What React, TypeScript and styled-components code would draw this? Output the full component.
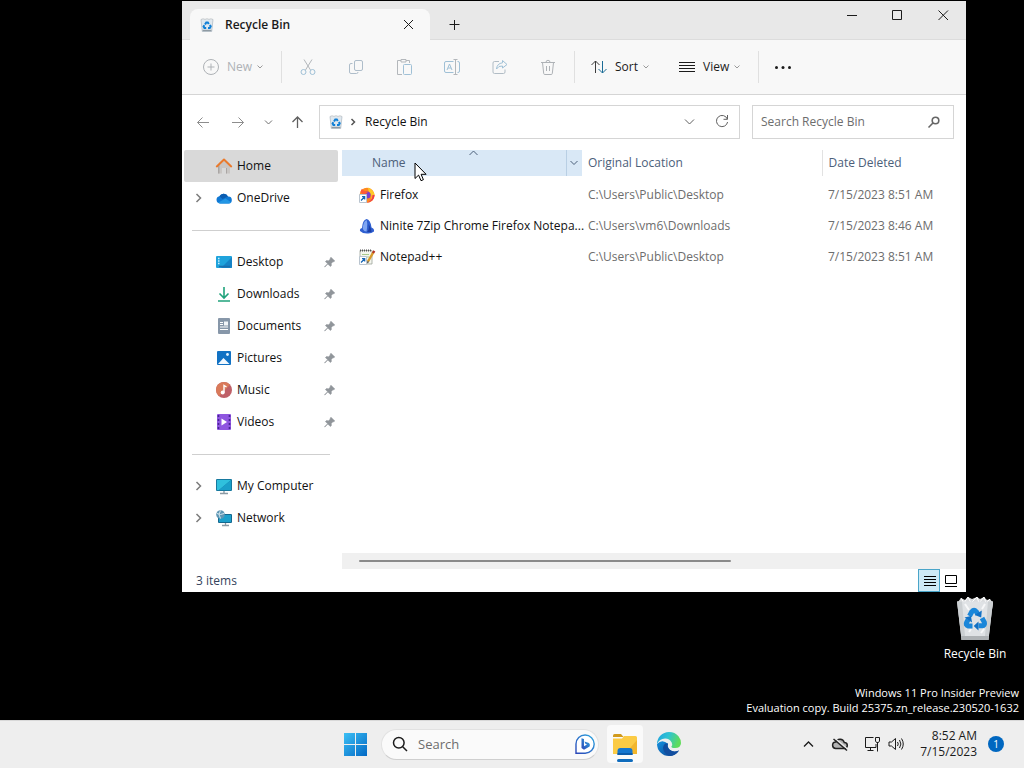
import React, { useState } from "react";
import styled, { createGlobalStyle, ThemeProvider } from "styled-components";

const theme = {
  font: '"Open Sans", "Noto Sans", "Liberation Sans", sans-serif',
  size: "12px",
  ink: "#1b1b1b",
  muted: "#6d6d6d",
  column: "#4c607a",
  line: "#d5d5d5",
  chrome: "#e8e8e8",
  surface: "#f8f8f8",
};

const GlobalStyle = createGlobalStyle`
  *, *::before, *::after { box-sizing: border-box; }
  body { margin: 0; background: #000; }
  button, input { font: inherit; color: inherit; }
`;

/* ---------- shared ---------- */

const Svg = styled.svg<{ $size?: number }>`
  display: block;
  flex: none;
  width: ${(p) => p.$size ?? 16}px;
  height: ${(p) => p.$size ?? 16}px;
  overflow: visible;
`;

type IconProps = { size?: number };

const Stroke = ({ d, size = 16, width = 1, color = "currentColor" }: { d: string; size?: number; width?: number; color?: string }) => (
  <Svg $size={size} viewBox={`0 0 ${size} ${size}`} fill="none" stroke={color} strokeWidth={width} aria-hidden="true">
    <path d={d} />
  </Svg>
);

const ChevronDown = () => <Stroke size={8} d="M1.5 2.5 4 5l2.5-2.5" />;

/* ---------- desktop ---------- */

const Screen = styled.div`
  display: flex;
  flex-direction: column;
  min-height: 100vh;
  background: #000;
  color: ${(p) => p.theme.ink};
  font-family: ${(p) => p.theme.font};
  font-size: ${(p) => p.theme.size};
  line-height: 16px;
`;

const Desktop = styled.main`
  position: relative;
  flex: 1;
  display: flex;
  padding: 1px 58px 128px 182px;
`;

const DesktopIcon = styled.button`
  position: absolute;
  right: 11px;
  bottom: 58px;
  width: 76px;
  display: flex;
  flex-direction: column;
  align-items: center;
  gap: 5px;
  padding: 0;
  border: 0;
  background: none;
  color: #fff;
  white-space: nowrap;
`;

const Watermark = styled.div`
  position: absolute;
  right: 5px;
  bottom: 5px;
  color: #fff;
  font-size: 11px;
  line-height: 15px;
  text-align: right;
`;

/* ---------- window ---------- */

const Window = styled.section`
  flex: 1;
  min-width: 0;
  display: flex;
  flex-direction: column;
  background: #fff;
`;

const TitleBar = styled.header`
  display: flex;
  height: 39px;
  padding-left: 8px;
  background: ${(p) => p.theme.chrome};
  border-bottom: 1px solid #dcdcdc;
`;

const Tab = styled.div`
  display: flex;
  align-items: center;
  align-self: flex-end;
  width: 240px;
  height: 31px;
  margin-bottom: -1px;
  padding: 0 14px 0 10px;
  gap: 11px;
  border-radius: 8px 8px 0 0;
  background: ${(p) => p.theme.surface};
`;

const TabTitle = styled.h1`
  flex: 1;
  margin: 0;
  font-size: inherit;
  font-weight: 600;
`;

const IconButton = styled.button<{ $w?: number; $h?: number; $color?: string; $low?: boolean }>`
  display: flex;
  flex: none;
  align-items: center;
  align-self: ${(p) => (p.$low ? "flex-end" : "auto")};
  justify-content: center;
  width: ${(p) => p.$w ?? 16}px;
  height: ${(p) => p.$h ?? 16}px;
  padding: 0;
  border: 0;
  background: none;
  color: ${(p) => p.$color ?? "inherit"};
`;

const Caption = styled.div`
  display: flex;
  margin-left: auto;
`;

const Toolbar = styled.div`
  display: flex;
  align-items: center;
  height: 55px;
  padding-left: 12px;
  background: ${(p) => p.theme.surface};
  border-bottom: 1px solid ${(p) => p.theme.line};
`;

const ToolButton = styled.button<{ $w: number; $pad?: number }>`
  display: flex;
  align-items: center;
  justify-content: ${(p) => (p.$pad ? "flex-start" : "center")};
  gap: 8px;
  width: ${(p) => p.$w}px;
  height: 32px;
  padding: 0 0 0 ${(p) => p.$pad ?? 0}px;
  border: 0;
  background: none;

  &:disabled {
    color: #aeb2b6;
  }

  svg:last-child:not(:first-child) {
    margin-left: -4px;
    color: #9a9a9a;
  }
`;

const ToolDivider = styled.span`
  width: 1px;
  height: 32px;
  margin: 0 2px;
  background: #e0e0e0;
`;

const AddressRow = styled.div`
  display: flex;
  align-items: center;
  padding: 10px 12px 11px 9px;
`;

const Field = styled.div<{ $search?: boolean }>`
  display: flex;
  align-items: center;
  flex: ${(p) => (p.$search ? "0 1 202px" : "1 1 0")};
  min-width: 0;
  height: 34px;
  margin-left: ${(p) => (p.$search ? 12 : 0)}px;
  padding: 0 ${(p) => (p.$search ? "12px 0 8px" : "1px 0 9px")};
  border: 1px solid ${(p) => p.theme.line};
  background: #fff;
`;

const Crumb = styled.span`
  flex: 1;
  color: #111;
`;

const SearchInput = styled.input`
  flex: 1;
  min-width: 0;
  padding: 0;
  border: 0;
  outline: 0;
  background: none;

  &::placeholder {
    color: ${(p) => p.theme.muted};
    opacity: 1;
  }
`;

const Body = styled.div`
  flex: 1;
  display: flex;
`;

/* ---------- navigation pane ---------- */

const Sidebar = styled.nav`
  flex: none;
  width: 160px;
  padding: 0 4px 0 2px;
`;

const Group = styled.ul`
  margin: 0;
  padding: 0;
  list-style: none;

  & + & {
    padding-top: 32px;
    background: linear-gradient(#cfcfcf, #cfcfcf) 8px 16px / 138px 1px no-repeat;
  }
`;

const NavLink = styled.a<{ $active?: boolean }>`
  display: grid;
  grid-template-columns: 18px 16px 1fr 12px;
  column-gap: 5px;
  align-items: center;
  height: 32px;
  padding: 0 2px 0 9px;
  border-radius: 2px;
  background: ${(p) => (p.$active ? "#d9d9d9" : "transparent")};
  color: #111;
  text-decoration: none;
  white-space: nowrap;
`;

const NavSlot = styled.span`
  display: flex;
  color: #7b7b7b;
`;

/* ---------- file list ---------- */

const Content = styled.div`
  flex: 1;
  min-width: 0;
  display: flex;
  flex-direction: column;
`;

const Files = styled.table`
  width: 100%;
  table-layout: fixed;
  border-collapse: collapse;
`;

const Col = styled.col<{ $w?: number }>`
  width: ${(p) => (p.$w ? `${p.$w}px` : "auto")};
`;

const Head = styled.th<{ $sorted?: boolean; $line?: boolean }>`
  position: relative;
  height: 26px;
  padding: 0 0 0 ${(p) => (p.$sorted ? 30 : 6)}px;
  border-left: ${(p) => (p.$line ? "1px solid #e2e2e2" : "0")};
  background: ${(p) => (p.$sorted ? "#d9e8f6" : "transparent")};
  color: ${(p) => p.theme.column};
  font-weight: 400;
  text-align: left;
  white-space: nowrap;
`;

const HeadInner = styled.div`
  display: flex;
  align-items: center;
  justify-content: space-between;
`;

const HeadButton = styled.button`
  padding: 0;
  border: 0;
  background: none;
`;

const FilterButton = styled.button`
  display: flex;
  align-items: center;
  justify-content: center;
  width: 16px;
  height: 26px;
  padding: 0 2px 0 0;
  border: 0;
  border-left: 1px solid #b9cfe4;
  background: none;
`;

const SortMark = styled.span`
  position: absolute;
  top: 0;
  left: 127px;
`;

const Pointer = styled.svg`
  position: absolute;
  z-index: 1;
  top: 12px;
  left: 72px;
  width: 13px;
  height: 20px;
`;

const Cell = styled.td<{ $name?: boolean }>`
  height: 31px;
  padding: 0 0 0 ${(p) => (p.$name ? 17 : 6)}px;
  color: ${(p) => (p.$name ? "#111" : p.theme.muted)};
  white-space: nowrap;
`;

const FileName = styled.div`
  display: flex;
  align-items: center;
  gap: 5px;
`;

const Gap = styled.tbody`
  td { height: 3px; padding: 0; }
`;

const ScrollTrack = styled.div`
  height: 16px;
  margin-top: auto;
  padding: 7px 17px;
  background: #f0f0f0;
`;

const ScrollThumb = styled.div`
  width: 63%;
  height: 2px;
  border-radius: 1px;
  background: #8a8a8a;
`;

const StatusBar = styled.footer`
  display: flex;
  align-items: center;
  height: 23px;
  padding: 0 4px 0 14px;
  color: #33435c;
`;

const ViewButton = styled.button<{ $on?: boolean }>`
  display: flex;
  align-items: center;
  justify-content: center;
  width: 22px;
  height: 23px;
  padding: 0;
  border: 1px solid ${(p) => (p.$on ? "#4aa5c9" : "transparent")};
  background: ${(p) => (p.$on ? "#cdeaf6" : "none")};
  color: #000;

  &:first-of-type {
    margin-left: auto;
  }
`;

/* ---------- taskbar ---------- */

const Taskbar = styled.footer`
  display: grid;
  grid-template-columns: 1fr auto 1fr;
  align-items: center;
  height: 48px;
  padding-bottom: 1px;
  background: #eeeeee;
  border-top: 1px solid #d8d8d8;
`;

const Pins = styled.div`
  grid-column: 2;
  display: flex;
  align-items: center;
  gap: 8px;
`;

const TaskSearch = styled.label`
  display: flex;
  align-items: center;
  gap: 10px;
  width: 218px;
  height: 31px;
  padding: 0 3px 0 10px;
  border: 1px solid #e2e2e2;
  border-bottom-color: #cfcfcf;
  border-radius: 16px;
  background: #fafafa;
  font-size: 13px;
`;

const AppButton = styled.button<{ $open?: boolean }>`
  position: relative;
  display: flex;
  align-items: center;
  justify-content: center;
  width: 36px;
  height: 38px;
  padding: 0;
  border: 0;
  border-radius: 4px;
  background: ${(p) => (p.$open ? "#fafafa" : "none")};

  &::after {
    content: "";
    position: absolute;
    bottom: 1px;
    left: 10px;
    width: 16px;
    height: 3px;
    border-radius: 2px;
    background: ${(p) => (p.$open ? "#0f6cbd" : "none")};
  }
`;

const Tray = styled.div`
  display: flex;
  align-items: center;
  justify-content: flex-end;
  padding-right: 20px;
  gap: 8px;
`;

const Clock = styled.time`
  margin: 0 3px 0 8px;
  text-align: right;
  white-space: nowrap;
`;

const Badge = styled.span`
  width: 16px;
  height: 16px;
  border-radius: 50%;
  background: #0067c0;
  color: #fff;
  font-size: 10px;
  text-align: center;
`;

/* ---------- drawings ---------- */

const RecycleArrows = () => (
  <g fill="none" stroke="#1a86d9" strokeWidth="5">
    <path d="M13.500 17 16 12.500q2-2.600 4.200 0l1.600 2.800" />
    <path d="M26 19l2.400 4.400q.8 3-2.400 3.400h-3.500" />
    <path d="M16.500 27h-4.200q-3.200-.8-1.600-3.800l1.500-2.700" />
    <path d="M25.800 11.500l-.6 7-6.400-2.600zM22.500 22.500v9l-4.800-4.400zM8.500 18.600l6.400-1.600 1.200 6.400z" fill="#1170c4" stroke="none" />
  </g>
);

const BigBin = () => (
  <svg width="36" height="45" viewBox="0 0 36 45" aria-hidden="true">
    <path d="M1 6 4 2l4 2 3-3 4 2 5-2 3 2 4-2 3 3 3-1 3 4-1 6H2z" fill="#d9dbdd" />
    <path d="M4 2l3 5 4-6 3 6 6-6 2 6 5-6 2 6 4-4" stroke="#fff" fill="none" />
    <path d="M0 5.500 36 5.500 31.500 44 4.500 44z" fill="#dfe2e5" />
    <path d="M0 5.500 5 5.500 8 40 4.200 40zM36 5.500 31 5.500 28 40 31.800 40z" fill="#cbcfd2" />
    <path d="M4.200 40H31.800L31.500 44H4.500z" fill="#aeb2b5" />
    <path d="M8 8l4 6M28 8l-3 5M12 36l2-3M27 33l-3 4" stroke="#f7f8f9" strokeWidth="2" />
    <g transform="translate(-1 3)"><RecycleArrows /></g>
  </svg>
);

const SmallBin = ({ size = 14 }: IconProps) => (
  <Svg $size={size} viewBox="0 0 14 14" aria-hidden="true">
    <path d="M1 1.500h12L11.700 13.500H2.300z" fill="#dfe8ef" stroke="#b4bec6" strokeWidth=".8" />
    <path d="M1 1.500 3 .5l2 .8L7 .4l2 .9 2-.8 2 1" fill="#f6f6f6" stroke="#c0c5c8" strokeWidth=".6" />
    <path d="M2.600 12.500h8.800" stroke="#8f9ba3" strokeWidth="1.400" />
    <path d="M5 6.600 6.300 4.400h1.500l1 1.600M10 6.800l.7 1.700-.9 1.400H8M6.200 9.900H4.400L3.600 8.600l.8-1.400" fill="none" stroke="#0f7fd6" strokeWidth="2" />
  </Svg>
);

const HomeIcon = () => (
  <Svg viewBox="0 0 16 16" aria-hidden="true">
    <path d="M2 7.500V15.500h4V10h4v5.500h4V7.500L8 2z" fill="#c9c6c4" />
    <path d="M2 7.500V15.500h1.500V7zM10 10v5.500h1V10z" fill="#aaa6a4" />
    <path d="M.8 8.400 8 1.600l7.200 6.800" fill="none" stroke="#ea7a2c" strokeWidth="2" strokeLinecap="round" strokeLinejoin="round" />
  </Svg>
);

const CloudIcon = () => (
  <Svg viewBox="0 0 16 16" aria-hidden="true">
    <path d="M4 13.500a3.700 3.700 0 0 1-.6-7.300A4.800 4.800 0 0 1 12 6.500a3.500 3.500 0 0 1 .6 7z" fill="#0f78d4" />
    <path d="M3.400 6.200A4.800 4.800 0 0 1 12 6.500L6.500 9z" fill="#0b5cb0" />
    <path d="M2 12.800 9.500 8.500l5.600 3.700a3.400 3.400 0 0 1-2.500 1.300H4a3.600 3.600 0 0 1-2-.7z" fill="#2396e4" />
  </Svg>
);

const DesktopGlyph = () => (
  <Svg viewBox="0 0 16 16" aria-hidden="true">
    <rect y="2" width="16" height="12" rx="1" fill="#1fa3dc" />
    <path d="M16 3v10a1 1 0 0 1-1 1H5z" fill="#1683c6" />
    <path d="M2 4.500h1.500M2 7h1.500M2 9.500h1.500" stroke="#c9f1ff" strokeWidth="1.500" />
    <path d="M3 12.500h11" stroke="#1b6fae" strokeWidth="1.500" />
  </Svg>
);

const DownloadIcon = () => <Stroke color="#20a37c" width={1.6} d="M8 1v10.500M3.500 7.500 8 12l4.500-4.500M2 15h12" />;

const DocumentIcon = () => (
  <Svg viewBox="0 0 16 16" aria-hidden="true">
    <rect x="2" width="12" height="16" rx="1" fill="#8797a9" />
    <path d="M4 4.500h3M4 6.500h3M4 9h8M4 11.500h8" stroke="#fff" strokeWidth="1.200" />
    <path d="M8 3.500h4v4H8z" fill="#f3f6f9" />
  </Svg>
);

const PictureIcon = () => (
  <Svg viewBox="0 0 16 16" aria-hidden="true">
    <rect x="1" y="1" width="14" height="14" rx="1" fill="#1272c4" />
    <path d="M2 14 7.500 8 13.500 14z" fill="#f2f9ff" />
    <circle cx="11.500" cy="4.500" r="1.400" fill="#e6f5ff" />
  </Svg>
);

const MusicIcon = () => (
  <Svg viewBox="0 0 16 16" aria-hidden="true">
    <circle cx="8" cy="8" r="8" fill="#bf6068" />
    <path d="M0 8a8 8 0 0 1 14-5.300L3 14.200A8 8 0 0 1 0 8z" fill="#d97a5a" />
    <circle cx="6.700" cy="10.500" r="2" fill="#fff" />
    <path d="M8 10.500V3.500l2.500 1.500" fill="none" stroke="#fff" strokeWidth="1.400" />
  </Svg>
);

const VideoIcon = () => (
  <Svg viewBox="0 0 16 16" aria-hidden="true">
    <rect x="1" width="14" height="16" rx="1" fill="#8f56e0" />
    <path d="M2.500 1v14M13.500 1v14" stroke="#4a2396" strokeWidth="1.600" strokeDasharray="2 2" />
    <path d="M5.500 4.500v7l5.500-3.500z" fill="#fff" />
  </Svg>
);

const ComputerIcon = () => (
  <Svg viewBox="0 0 16 16" aria-hidden="true">
    <rect y="1" width="16" height="12" rx="1" fill="#17799f" />
    <path d="M1 2h14L3 12H1z" fill="#2fc0dd" />
    <path d="M15 2v10H3z" fill="#1a9fc9" />
    <path d="M8 13v2M4 15.500h8" stroke="#8b9aa5" strokeWidth="1.400" />
  </Svg>
);

const NetworkIcon = () => (
  <Svg viewBox="0 0 16 16" aria-hidden="true">
    <rect x="2" y="4" width="14" height="9" rx="1" fill="#14688f" />
    <path d="M3 5h12v7H3z" fill="#1da0cb" />
    <path d="M9.500 13v2M6 15.500h7" stroke="#8b9aa5" strokeWidth="1.300" />
    <circle cx="4.500" cy="4.500" r="4.300" fill="#5f97b5" />
    <path d="M1 3.500q3.500 2 7 0M4.500.5q-3 4 0 8" fill="none" stroke="#d4e6ee" />
  </Svg>
);

const PinIcon = () => (
  <Svg $size={12} viewBox="0 0 12 12" aria-hidden="true">
    <path d="M7 1.200 10.800 5l-1 .8-.8-.1-1.700 1.700.1 2.200-1 1L3.800 8 1 10.900.6 11 .8 10.500 3.600 7.700 1.400 5.600l1-1 2.200.1L6.300 3l-.1-.9z" fill="#90959a" stroke="#90959a" strokeWidth=".5" />
  </Svg>
);

const ShortcutArrow = () => (
  <>
    <path d="M.5 7.500h7v8h-7z" fill="#fff" stroke="#b9c4cf" />
    <path d="M2 13.500 5.500 10M3 9.700h2.700v2.800" fill="none" stroke="#1464b4" strokeWidth="1.200" />
  </>
);

const FirefoxIcon = () => (
  <Svg viewBox="0 0 16 16" aria-hidden="true">
    <circle cx="8" cy="8.200" r="7.500" fill="#ff8a1e" />
    <path d="M9 .5q6 2.500 6.500 7.500a7.500 7.500 0 0 1-5 7q4-5 .5-9Q9 4 9 .5z" fill="#ffc928" />
    <path d="M15.500 8a7.500 7.500 0 0 1-8 7.700q6-2 6-7.700z" fill="#f0384f" />
    <circle cx="8" cy="8" r="3.600" fill="#7a3fd0" />
    <path d="M1.500 5Q2 2.500 3 1.800 4 4 7 4.200q2 .6 1.500 1.800-3 .5-3.500 2.500z" fill="#ff5a36" />
    <ShortcutArrow />
  </Svg>
);

const NiniteIcon = () => (
  <Svg viewBox="0 0 16 16" aria-hidden="true">
    <path d="M1 13Q.5 10.500 3 10 3.500 2 7.500 1q4 .5 5 8.500 3 1 2.500 4-3 2.500-7 2-4.500 0-7-2.500z" fill="#2f5fd0" />
    <path d="M3.800 11Q4 3.500 7.500 2 9 5 7.500 13.500 5 13.500 3.800 11z" fill="#7fa6f2" />
    <path d="M8 14q2.500-2 1.500-8 3 5 3 8z" fill="#1c3fa4" />
  </Svg>
);

const NotepadIcon = () => (
  <Svg viewBox="0 0 16 16" aria-hidden="true">
    <path d="M1 1.500h12v13.500H1z" fill="#f4f6ee" stroke="#9da39b" strokeWidth=".8" />
    <path d="M1 1.500h12" stroke="#555" strokeWidth="2" strokeDasharray="1 1" />
    <path d="M3 5.500h7M3 8h7" stroke="#a8c98c" />
    <path d="M9 12.500 14.500 3" stroke="#d79a2b" strokeWidth="2.400" />
    <path d="M14 4 15.300 1.800" stroke="#b43326" strokeWidth="2.400" />
    <path d="M8.200 14.500 8.500 12l1.500.9z" fill="#222" />
    <ShortcutArrow />
  </Svg>
);

const WindowsLogo = () => (
  <Svg $size={24} viewBox="0 0 24 24" aria-hidden="true">
    <defs>
      <linearGradient id="win" x1="0" y1="0" x2="1" y2="1">
        <stop offset="0" stopColor="#3cc0f5" />
        <stop offset="1" stopColor="#0268c4" />
      </linearGradient>
    </defs>
    <path d="M1 1h11v11H1zM13 1h11v11H13zM1 13h11v11H1zM13 13h11v11H13z" fill="url(#win)" />
  </Svg>
);

const BingIcon = () => (
  <Svg $size={20} viewBox="0 0 20 20" aria-hidden="true">
    <defs>
      <linearGradient id="bing" x1="0" y1="1" x2="1" y2="0">
        <stop offset="0" stopColor="#2b46b8" />
        <stop offset="1" stopColor="#2fa8e0" />
      </linearGradient>
    </defs>
    <path d="M1 19.200V10a9.100 9.100 0 1 1 9.200 9.200z" fill="#fff" stroke="url(#bing)" strokeWidth="1.400" />
    <path d="M6.500 4.200 9 5v7.200l3-1.700-1.600-.8-1-2.300 4.600 1.600q1.600 1.700.6 3.600L9 15.800 6.500 14z" fill="url(#bing)" />
  </Svg>
);

const FolderIcon = () => (
  <Svg $size={24} viewBox="0 0 24 24" aria-hidden="true">
    <path d="M0 3.500Q0 2 1.500 2H8l2.500 3H0z" fill="#d19a1c" />
    <path d="M0 6.500h9L11 4h11.500Q24 4 24 5.500V22H0z" fill="#fbcb45" />
    <path d="M24 8v14H12z" fill="#f2b62c" />
    <path d="M4.500 23v-4Q4.500 16 7.500 16h9q3 0 3 3v4z" fill="#1476cf" />
    <path d="M4.500 23v-2h15v2z" fill="#0c5cab" />
  </Svg>
);

const EdgeIcon = () => (
  <Svg $size={24} viewBox="0 0 24 24" aria-hidden="true">
    <defs>
      <linearGradient id="edgeTop" x1="0" y1="0" x2="1" y2=".3">
        <stop offset="0" stopColor="#1f9fe0" />
        <stop offset=".5" stopColor="#2fc3d2" />
        <stop offset="1" stopColor="#5fdc5a" />
      </linearGradient>
      <linearGradient id="edgeLow" x1="0" y1="0" x2="1" y2="1">
        <stop offset="0" stopColor="#1591df" />
        <stop offset="1" stopColor="#0b3f8f" />
      </linearGradient>
    </defs>
    <path d="M0 12a12 12 0 0 0 12 12q6.500 0 10-5.500-5 2.500-9-.5-3.200-2.600-2-6.200Q5 6.500 0 12z" fill="url(#edgeLow)" />
    <path d="M0 12A12 12 0 0 1 12 0q6 0 9.500 4.300Q24 7.500 24 11.200q-.4 4.800-6 4.900-3.700-.2-3.600-1.700 1.400-2 .3-4Q12.500 6.500 8 6.600 2.500 7 0 12z" fill="url(#edgeTop)" />
    <path d="M8.300 11.500Q4.500 15 7 19.500q2 3.600 6.500 4.400 5.500-.9 8.500-5.400-5.500 2.200-9.300-.7-3-2.600-1.700-6.200z" fill="#124e9f" />
  </Svg>
);

const TrayCloud = () => (
  <Svg $size={16} viewBox="0 0 16 16" fill="none" aria-hidden="true">
    <path d="M4 12.500a3.300 3.300 0 0 1-.2-6.600A4.600 4.600 0 0 1 12.300 6.500a3 3 0 0 1 0 6z" fill="#b4b4b4" stroke="#222" strokeWidth="1.500" />
    <path d="M2.500 2 15.500 13" stroke="#eee" strokeWidth="1.500" />
    <path d="M1.500 3 15 14.500" stroke="#222" strokeWidth="1.500" />
  </Svg>
);

/* ---------- data ---------- */

type NavItem = { label: string; icon: React.ReactNode; expand?: boolean; pin?: boolean };

const navGroups: NavItem[][] = [
  [
    { label: "Home", icon: <HomeIcon /> },
    { label: "OneDrive", icon: <CloudIcon />, expand: true },
  ],
  [
    { label: "Desktop", icon: <DesktopGlyph />, pin: true },
    { label: "Downloads", icon: <DownloadIcon />, pin: true },
    { label: "Documents", icon: <DocumentIcon />, pin: true },
    { label: "Pictures", icon: <PictureIcon />, pin: true },
    { label: "Music", icon: <MusicIcon />, pin: true },
    { label: "Videos", icon: <VideoIcon />, pin: true },
  ],
  [
    { label: "My Computer", icon: <ComputerIcon />, expand: true },
    { label: "Network", icon: <NetworkIcon />, expand: true },
  ],
];

const files = [
  { name: "Firefox", icon: <FirefoxIcon />, from: "C:\\Users\\Public\\Desktop", date: "7/15/2023 8:51 AM" },
  { name: "Ninite 7Zip Chrome Firefox Notepa...", icon: <NiniteIcon />, from: "C:\\Users\\vm6\\Downloads", date: "7/15/2023 8:46 AM" },
  { name: "Notepad++", icon: <NotepadIcon />, from: "C:\\Users\\Public\\Desktop", date: "7/15/2023 8:51 AM" },
];

const tools: { label: string; icon: React.ReactNode }[] = [
  {
    label: "Cut",
    icon: (
      <Svg viewBox="0 0 16 16" fill="none" stroke="#b3b7bb" aria-hidden="true">
        <path d="M4 .5 10.500 11M12 .5 5.500 11" />
        <circle cx="3.500" cy="13" r="2.500" stroke="#9fc0d6" />
        <circle cx="12.500" cy="13" r="2.500" stroke="#9fc0d6" />
      </Svg>
    ),
  },
  {
    label: "Copy",
    icon: (
      <Svg viewBox="0 0 16 16" fill="none" stroke="#aebdca" aria-hidden="true">
        <rect x="6.500" y="1.500" width="8" height="10" rx="1.500" />
        <path d="M4.500 4.500H3A1.500 1.500 0 0 0 1.500 6v7A1.500 1.500 0 0 0 3 14.500h5.500q1.500 0 1.500-1.500" />
      </Svg>
    ),
  },
  {
    label: "Paste",
    icon: (
      <Svg viewBox="0 0 16 16" fill="none" stroke="#b3b7bb" aria-hidden="true">
        <path d="M5 1.500H1.500v14H6M10 1.500h3.500V4M5 .5h5v2.500H5z" />
        <rect x="7.500" y="5.500" width="8" height="10" rx="1" stroke="#9fc0d6" />
      </Svg>
    ),
  },
  {
    label: "Rename",
    icon: (
      <Svg viewBox="0 0 16 16" fill="none" stroke="#9fc0d6" aria-hidden="true">
        <path d="M9.500 2.500H2A1.500 1.500 0 0 0 .5 4v8A1.500 1.500 0 0 0 2 13.500h7.500M13.500 2.500h.5A1.500 1.500 0 0 1 15.500 4v8a1.500 1.500 0 0 1-1.500 1.500h-.5M3 11 5.500 5 8 11M4 9h3" />
        <path d="M9.500.5h4M9.500 15.500h4M11.500.5v15" stroke="#b3b7bb" />
      </Svg>
    ),
  },
  {
    label: "Share",
    icon: (
      <Svg viewBox="0 0 16 16" fill="none" stroke="#b1bcc5" aria-hidden="true">
        <path d="M7 2.500H2.500A1.500 1.500 0 0 0 1 4v9a1.500 1.500 0 0 0 1.500 1.500h9A1.500 1.500 0 0 0 13 13v-2.500" />
        <path d="M10.500 1.500 15 5.500 10.500 9V7Q6.500 6.500 4.500 10 5 4.500 10.500 3.800z" stroke="#9fc0d6" strokeLinejoin="round" />
      </Svg>
    ),
  },
  {
    label: "Delete",
    icon: <Stroke d="M1 3.500h14M6 3.300a2 2 0 0 1 4 0M2.500 3.500l1.200 11q.1 1 1.100 1h6.400q1 0 1.100-1l1.200-11M6.500 7v5M9.500 7v5" />,
  },
];

/* ---------- page ---------- */

export default function App() {
  const [query, setQuery] = useState("");
  const [webQuery, setWebQuery] = useState("");

  return (
    <ThemeProvider theme={theme}>
      <GlobalStyle />
      <Screen>
        <Desktop>
          <Window aria-label="Recycle Bin">
            <TitleBar>
              <Tab>
                <SmallBin />
                <TabTitle>Recycle Bin</TabTitle>
                <IconButton aria-label="Close tab"><Stroke d="M4 3l9 9M13 3l-9 9" /></IconButton>
              </Tab>
              <IconButton $w={48} $h={31} $low aria-label="New tab">
                <Stroke d="M8.500 4v10M3.500 8.500h10" />
              </IconButton>
              <Caption>
                <IconButton $w={45} $h={28} aria-label="Minimize"><Stroke d="M3 8.500h10" /></IconButton>
                <IconButton $w={46} $h={28} aria-label="Maximize"><Stroke d="M3.500 3.500h9v9h-9z" /></IconButton>
                <IconButton $w={46} $h={28} aria-label="Close"><Stroke d="M3.500 3.500l9.500 9.500M13 3.500 3.500 13" /></IconButton>
              </Caption>
            </TitleBar>

            <Toolbar role="toolbar">
              <ToolButton $w={85} $pad={9} disabled>
                <Stroke d="M8 .5a7.500 7.500 0 1 1 0 15 7.500 7.500 0 0 1 0-15M8 4.500v7M4.500 8h7" />
                New
                <ChevronDown />
              </ToolButton>
              <ToolDivider />
              {tools.map((t) => (
                <ToolButton key={t.label} $w={48} disabled aria-label={t.label}>{t.icon}</ToolButton>
              ))}
              <ToolDivider />
              <ToolButton $w={88} $pad={14}>
                <Svg viewBox="0 0 16 16" fill="none" aria-hidden="true">
                  <path d="M4.500 14V2M.5 6l4-4 4 4" stroke="#3c3c3c" />
                  <path d="M11.500 2v12M7.500 10l4 4 4-4" stroke="#1b6c96" />
                </Svg>
                Sort
                <ChevronDown />
              </ToolButton>
              <ToolButton $w={91} $pad={14}>
                <Stroke d="M0 3.500h16M0 6.500h16M0 9.500h16M0 12.500h16" />
                View
                <ChevronDown />
              </ToolButton>
              <ToolDivider />
              <ToolButton $w={44} aria-label="See more">
                <Svg viewBox="0 0 16 16" fill="#1b1b1b" aria-hidden="true">
                  <circle cx="1.500" cy="8.500" r="1.500" /><circle cx="8" cy="8.500" r="1.500" /><circle cx="14.500" cy="8.500" r="1.500" />
                </Svg>
              </ToolButton>
            </Toolbar>

            <AddressRow>
              <IconButton $w={24} $h={32} $color="#8d8d8d" aria-label="Back"><Stroke d="M14 8.500H2.500M7.500 3.500l-5 5 5 5" /></IconButton>
              <IconButton $w={46} $h={32} $color="#8d8d8d" aria-label="Forward"><Stroke d="M2 8.500h11.500M8.500 3.500l5 5-5 5" /></IconButton>
              <IconButton $w={16} $h={32} $color="#707070" aria-label="Recent locations"><Stroke d="M4 6.500 7.500 10l3.500-3.500" /></IconButton>
              <IconButton $w={42} $h={32} $color="#606060" aria-label="Up"><Stroke d="M7.500 14V3M2.500 8l5-5 5 5" width={1.3} /></IconButton>
              <Field>
                <SmallBin />
                <Stroke d="M8.500 8 11.500 11l-3 3" width={1.5} color="#555" size={22} />
                <Crumb>Recycle Bin</Crumb>
                <IconButton $w={32} $h={32} $color="#606060" aria-label="Show history"><Stroke d="M3 5.500 7.500 10 12 5.500" /></IconButton>
                <IconButton $w={32} $h={32} $color="#606060" aria-label="Refresh"><Stroke d="M13.300 5A5.600 5.600 0 1 0 13.600 8M13.500 1v4.300H9.500" /></IconButton>
              </Field>
              <Field $search>
                <SearchInput type="search" aria-label="Search Recycle Bin" placeholder="Search Recycle Bin" value={query} onChange={(e) => setQuery(e.target.value)} />
                <Svg $size={14} viewBox="0 0 14 14" fill="none" stroke="#666" strokeWidth="1.600" aria-hidden="true">
                  <circle cx="8.500" cy="5.500" r="3.300" /><path d="M6.200 7.800 1.500 12.500" />
                </Svg>
              </Field>
            </AddressRow>

            <Body>
              <Sidebar aria-label="Folders">
                {navGroups.map((group, i) => (
                  <Group key={i}>
                    {group.map((item) => (
                      <li key={item.label}>
                        <NavLink href="#" $active={item.label === "Home"}>
                          <NavSlot>{item.expand && <Stroke size={12} d="M3.500 2 7.500 6l-4 4" width={1.5} />}</NavSlot>
                          {item.icon}
                          <span>{item.label}</span>
                          {item.pin && <PinIcon />}
                        </NavLink>
                      </li>
                    ))}
                  </Group>
                ))}
              </Sidebar>

              <Content>
                <Files>
                  <colgroup><Col $w={240} /><Col $w={240} /><Col /></colgroup>
                  <thead>
                    <tr>
                      <Head $sorted aria-sort="ascending">
                        <HeadInner>
                          <HeadButton>Name</HeadButton>
                          <FilterButton aria-label="Filter by name"><Stroke size={8} d="M.5 2 4 5.500 7.500 2" /></FilterButton>
                        </HeadInner>
                        <SortMark><Stroke size={9} d="M.5 5 4.500 1l4 4" /></SortMark>
                        <Pointer viewBox="0 0 13 20" aria-hidden="true">
                          <path d="M1 1v15.500l3.600-3.400 2.400 5.600 2.400-1-2.300-5.400h5z" fill="#fff" stroke="#000" />
                        </Pointer>
                      </Head>
                      <Head><HeadButton>Original Location</HeadButton></Head>
                      <Head $line><HeadButton>Date Deleted</HeadButton></Head>
                    </tr>
                  </thead>
                  <Gap aria-hidden="true"><tr><td colSpan={3} /></tr></Gap>
                  <tbody>
                    {files.map((f) => (
                      <tr key={f.name}>
                        <Cell $name><FileName>{f.icon}<span>{f.name}</span></FileName></Cell>
                        <Cell>{f.from}</Cell>
                        <Cell>{f.date}</Cell>
                      </tr>
                    ))}
                  </tbody>
                </Files>
                <ScrollTrack><ScrollThumb /></ScrollTrack>
              </Content>
            </Body>

            <StatusBar>
              <span>3 items</span>
              <ViewButton $on aria-label="Details view"><Stroke size={12} d="M1 1.500h12M1 4.500h12M1 7.500h12M1 10.500h12" /></ViewButton>
              <ViewButton aria-label="Large icons view"><Stroke size={12} d="M.5.5h11v8H.5zM0 11.500h12" /></ViewButton>
            </StatusBar>
          </Window>

          <DesktopIcon>
            <BigBin />
            Recycle Bin
          </DesktopIcon>
          <Watermark>
            Windows 11 Pro Insider Preview
            <br />
            Evaluation copy. Build 25375.zn_release.230520-1632
          </Watermark>
        </Desktop>

        <Taskbar>
          <Pins>
            <AppButton aria-label="Start"><WindowsLogo /></AppButton>
            <TaskSearch>
              <Svg viewBox="0 0 16 16" fill="none" stroke="#1b1b1b" strokeWidth="1.500" aria-hidden="true">
                <circle cx="6.800" cy="6.800" r="5.300" /><path d="M10.700 10.700 15 15" />
              </Svg>
              <SearchInput aria-label="Search" placeholder="Search" value={webQuery} onChange={(e) => setWebQuery(e.target.value)} />
              <BingIcon />
            </TaskSearch>
            <AppButton $open aria-label="File Explorer"><FolderIcon /></AppButton>
            <AppButton aria-label="Microsoft Edge"><EdgeIcon /></AppButton>
          </Pins>
          <Tray>
            <IconButton aria-label="Show hidden icons"><Stroke d="M4 10.500 8.500 6l4.500 4.500" width={1.3} /></IconButton>
            <IconButton $w={32} aria-label="OneDrive"><TrayCloud /></IconButton>
            <IconButton aria-label="Network">
              <Stroke d="M9.500 1.500h-8v10h10.500V8M6.500 11.500v3M3.500 14.500h6M11.500 1.500h4v3.500l-1 1.500h-2l-1-1.500zM13.500 6.500v9" />
            </IconButton>
            <IconButton aria-label="Volume">
              <Stroke d="M1 6h2.500L7.500 2.500v11L3.500 10H1zM9.500 6q1.500 2 0 4M11.500 4q2.800 4 0 8M13.500 2.500q3.500 5.500 0 11" />
            </IconButton>
            <Clock>8:52 AM<br />7/15/2023</Clock>
            <Badge>1</Badge>
          </Tray>
        </Taskbar>
      </Screen>
    </ThemeProvider>
  );
}
